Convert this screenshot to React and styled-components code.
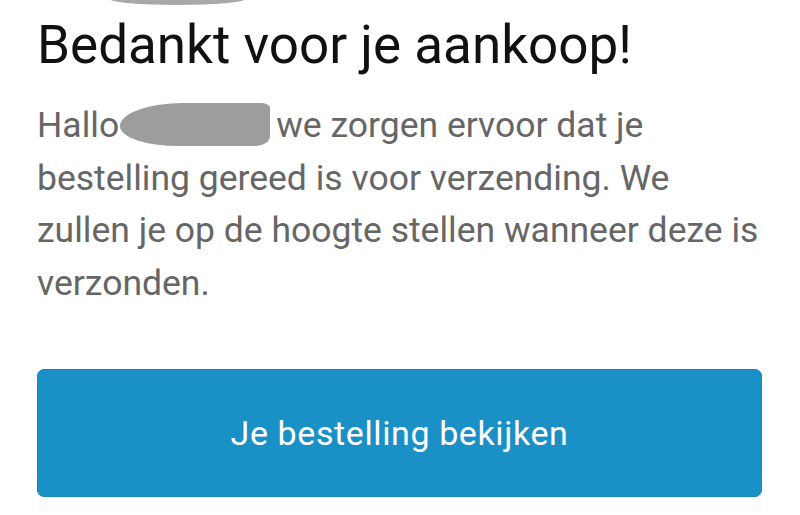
import React from "react"
import styled, { createGlobalStyle } from "styled-components"

const Global = createGlobalStyle`
  html, body { margin: 0; padding: 0; background: #fff; }
  body { font-family: Roboto, "Noto Sans", sans-serif; }
`

const Page = styled.div`
  width: 800px;
  height: 515px;
  overflow: hidden;
  position: relative;
  box-sizing: border-box;
  padding: 14px 38px 0 37px;
  display: flex;
  flex-direction: column;
`

const TopSmudge = styled.div`
  position: absolute;
  top: -7px;
  left: 110px;
  width: 135px;
  height: 12px;
  border-radius: 0 0 50% 50%;
  background: #a8a8a8;
`

const Title = styled.h1`
  margin: 0;
  font-size: 53px;
  font-weight: 400;
  line-height: 62px;
  color: #111;
`

const Body = styled.p`
  margin: 23px 0 0;
  font-size: 35.5px;
  line-height: 52.7px;
  color: #666;
`

const Redacted = styled.span`
  display: inline-block;
  width: 150px;
  height: 43px;
  margin: 0 6px -9px 1px;
  background: #9d9d9d;
  border-radius: 55% 8% 12% 50% / 70% 15% 30% 60%;
`

const Button = styled.button`
  margin-top: 59px;
  flex-shrink: 0;
  height: 128px;
  width: 100%;
  border: 1px solid #1486bd;
  border-radius: 7px;
  background: #1990c6;
  color: #fff;
  font-family: Roboto, "Noto Sans", sans-serif;
  font-size: 34px;
  letter-spacing: 0.6px;
  padding: 0;
`

export default function App() {
  return (
    <>
      <Global />
      <Page>
        <TopSmudge />
        <Title>Bedankt voor je aankoop!</Title>
        <Body>
          Hallo<Redacted />we zorgen ervoor dat je bestelling gereed is voor verzending. We<br />
          zullen je op de hoogte stellen wanneer deze is verzonden.
        </Body>
        <Button>Je bestelling bekijken</Button>
      </Page>
    </>
  )
}
